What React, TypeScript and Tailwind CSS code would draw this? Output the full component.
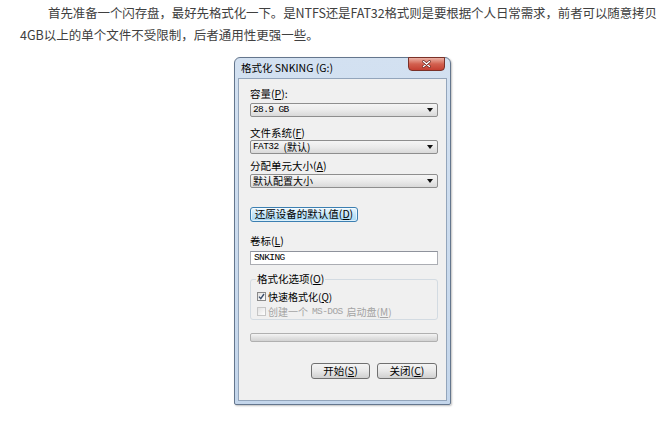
import type { ReactNode } from "react";

const mono = "font-['Liberation_Mono',monospace] text-[9.5px] tracking-[-0.6px] leading-none";

function Label({ children, className = "" }: { children: ReactNode; className?: string }) {
    return <div className={`h-[14px] leading-[14px] ${className}`}>{children}</div>;
}

function Select({ children, className = "" }: { children: ReactNode; className?: string }) {
    return (
        <div
            className={`flex h-[14px] items-center justify-between rounded-[2px] border border-[#8e8e8e] bg-gradient-to-b from-[#f5f5f5] via-[#ebebeb] to-[#d9d9d9] pl-[2px] pr-[4px] leading-none ${className}`}
        >
            <span className="flex items-center">{children}</span>
            <svg width="6" height="4" viewBox="0 0 6 4">
                <path d="M0 0h6L3 4z" fill="#111" />
            </svg>
        </div>
    );
}

function Check({ checked, disabled, children }: { checked?: boolean; disabled?: boolean; children: ReactNode }) {
    return (
        <div
            className={`flex h-[15px] items-center gap-[2px] pl-[6px] text-[10px] ${disabled ? "text-[#a3a3a3]" : "text-black"}`}
        >
            <span
                className={`flex h-[9px] w-[9px] items-center justify-center border bg-gradient-to-br from-[#e2e2e2] to-white ${
                    disabled ? "border-[#c6c6c6]" : "border-[#8a8a8a]"
                }`}
            >
                {checked && (
                    <svg width="7" height="7" viewBox="0 0 7 7">
                        <path d="M1 3.6l1.8 2L6 1" fill="none" stroke="#3b4f6e" strokeWidth="1.4" />
                    </svg>
                )}
            </span>
            <span className="flex items-center leading-[12px]">{children}</span>
        </div>
    );
}

export default function App() {
    return (
        <div className="h-[448px] w-[666px] overflow-hidden bg-white font-['Noto_Sans_CJK_SC',sans-serif]">
            <div className="pl-[20px] pt-[2px] text-[12.5px] leading-[22px] text-[#404040]">
                <p className="whitespace-nowrap pl-[28px] tracking-[-0.12px]">
                    首先准备一个闪存盘，最好先格式化一下。是NTFS还是FAT32格式则是要根据个人日常需求，前者可以随意拷贝
                </p>
                <p className="whitespace-nowrap">4GB以上的单个文件不受限制，后者通用性更强一些。</p>
            </div>

            {/* format dialog */}
            <div className="ml-[234px] mt-[11px] flex h-[348px] w-[217px] flex-col rounded-t-[6px] rounded-b-[2px] border border-[#64768d] bg-gradient-to-b from-[#d3e1f1] to-[#c4d6eb] px-[3px] pb-[3px] shadow-[1px_1px_2px_rgba(0,0,0,0.25)]">
                <div className="flex h-[20px] items-start justify-between">
                    <span className="pl-[3px] pt-[3px] text-[10.5px] leading-[14px] text-black">格式化 SNKING (G:)</span>
                    <div className="-mt-px mr-[2px] flex h-[14px] w-[37px] items-center justify-center rounded-b-[4px] border border-[#7a3128] bg-gradient-to-b from-[#eab0a4] via-[#d2604f] to-[#c43f31]">
                        <svg width="9" height="8" viewBox="0 0 9 8">
                            <path d="M1.5 1.5l6 5M7.5 1.5l-6 5" stroke="#5a1d16" strokeWidth="2.6" strokeLinecap="round" />
                            <path d="M1.5 1.5l6 5M7.5 1.5l-6 5" stroke="#fff" strokeWidth="1.5" strokeLinecap="round" />
                        </svg>
                    </div>
                </div>

                <div className="flex flex-1 flex-col border border-[#93a5bb] bg-[#f0f0f0] pl-[11px] pr-[8px] text-[10.5px] text-black">
                    <Label className="mt-[8px]">
                        容量(<u>P</u>):
                    </Label>
                    <Select className="mt-[2px]">
                        <span className={mono}>28.9 GB</span>
                    </Select>

                    <Label className="mt-[9px]">
                        文件系统(<u>F</u>)
                    </Label>
                    <Select>
                        <span className={mono}>FAT32</span>
                        <span className="ml-[5px] text-[10px]">(默认)</span>
                    </Select>

                    <Label className="mt-[5px]">
                        分配单元大小(<u>A</u>)
                    </Label>
                    <Select className="mt-[1px]">
                        <span className="text-[10px]">默认配置大小</span>
                    </Select>

                    <div className="mt-[19px] flex h-[15px] w-[108px] items-center justify-center rounded-[3px] border border-[#3c7fb1] bg-gradient-to-b from-[#eaf6fd] via-[#c4e5f8] to-[#a9daf5] leading-none shadow-[inset_0_0_0_1px_rgba(255,255,255,0.6)]">
                        还原设备的默认值(<u>D</u>)
                    </div>

                    <Label className="mt-[12px]">
                        卷标(<u>L</u>)
                    </Label>
                    <div className="mt-[3px] flex h-[14px] items-center border border-[#abadb3] border-t-[#8f939c] bg-white pl-[3px]">
                        <span className={mono}>SNKING</span>
                    </div>

                    <fieldset className="mt-[7px] rounded-[3px] border border-[#d3dbe2]">
                        <legend className="ml-[5px] px-[1px] leading-[14px]">
                            格式化选项(<u>O</u>)
                        </legend>
                        <div className="mt-[3px]">
                            <Check checked>
                                快速格式化(<u>Q</u>)
                            </Check>
                            <Check disabled>
                                创建一个<span className={`${mono} mx-[4px]`}>MS-DOS</span>启动盘(<u>M</u>)
                            </Check>
                        </div>
                    </fieldset>

                    <div className="mt-[13px] h-[9px] rounded-[2px] border border-[#b0b0b0] bg-gradient-to-b from-[#f4f4f4] via-[#e2e2e2] to-[#d2d2d2]" />

                    <div className="mr-[1px] mt-[21px] flex justify-end gap-[7px]">
                        <div className="flex h-[16px] w-[59px] items-center justify-center rounded-[3px] border border-[#707070] bg-gradient-to-b from-[#f4f4f4] via-[#e8e8e8] to-[#d0d0d0] leading-none">
                            开始(<u>S</u>)
                        </div>
                        <div className="flex h-[16px] w-[60px] items-center justify-center rounded-[3px] border border-[#707070] bg-gradient-to-b from-[#f4f4f4] via-[#e8e8e8] to-[#d0d0d0] leading-none">
                            关闭(<u>C</u>)
                        </div>
                    </div>
                </div>
            </div>
        </div>
    );
}
